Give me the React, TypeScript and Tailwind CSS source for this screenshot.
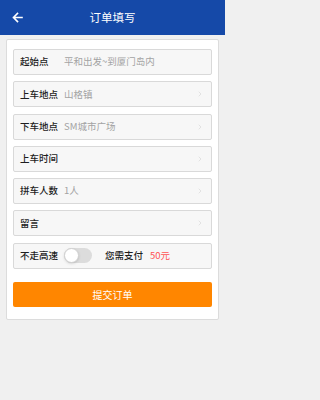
import { ChevronRight } from 'lucide-react';

const font = { fontFamily: '"Noto Sans CJK SC", "Noto Sans", sans-serif' };

interface RowProps {
  label: string;
  value?: string;
  arrow?: boolean;
}

function Row({ label, value, arrow = true }: RowProps) {
  return (
    <div className="flex h-[26px] items-center rounded-[2px] border border-[#d9d9d9] bg-[#f7f7f7] pl-[6px] pr-[7px]">
      <span className="w-[44px] shrink-0 text-[9.5px] font-medium leading-none text-[#1e1e1e]">{label}</span>
      {value && <span className="text-[9.5px] leading-none text-[#a3a3a3]">{value}</span>}
      <div className="flex-1" />
      {arrow && <ChevronRight className="size-[8px] text-[#cdcdcd]" strokeWidth={1.5} />}
    </div>
  );
}

export default function App() {
  return (
    <div className="min-h-screen w-full bg-[#f0f0f0]" style={font}>
      <div className="w-[225px]">
        {/* Header */}
        <div className="relative flex h-[35px] items-center justify-center bg-[#1549a8]">
          <svg
            className="absolute left-[12px] top-[12px]"
            width="11"
            height="11"
            viewBox="0 0 11 11"
            fill="none"
            stroke="white"
            strokeWidth="1.6"
            strokeLinecap="square"
          >
            <path d="M10 5.5H1.5M5.5 1.5L1.5 5.5L5.5 9.5" />
          </svg>
          <span className="text-[11.5px] text-white">订单填写</span>
        </div>

        {/* Card */}
        <div className="px-[6px] pt-[4px]">
          <div className="rounded-[2px] border border-[#dcdcdc] bg-white px-[6px] pt-[9px] pb-[12px]">
            <div className="flex flex-col gap-[6.3px]">
              <Row label="起始点" value="平和出发~到厦门岛内" arrow={false} />
              <Row label="上车地点" value="山格镇" />
              <Row label="下车地点" value="SM城市广场" />
              <Row label="上车时间" />
              <Row label="拼车人数" value="1人" />
              <Row label="留言" />

              {/* Toggle row */}
              <div className="flex h-[26px] items-center rounded-[2px] border border-[#d9d9d9] bg-[#f7f7f7] pl-[6px]">
                <span className="text-[9.5px] font-medium leading-none text-[#1e1e1e]">不走高速</span>
                <div className="ml-[6px] flex h-[15px] w-[28px] items-center rounded-full bg-[#dcdcdc]">
                  <div className="h-[15px] w-[15px] rounded-full border border-[#d0d0d0] bg-white shadow-sm" />
                </div>
                <span className="ml-[13px] text-[9.5px] font-medium leading-none text-[#1e1e1e]">您需支付</span>
                <span className="ml-[7px] text-[9.5px] leading-none text-[#ff5454]">50元</span>
              </div>
            </div>

            <button className="mt-[13.5px] flex h-[25px] w-full items-center justify-center rounded-[2px] bg-[#ff8600] text-[10px] text-white">
              提交订单
            </button>
          </div>
        </div>
      </div>
    </div>
  );
}
